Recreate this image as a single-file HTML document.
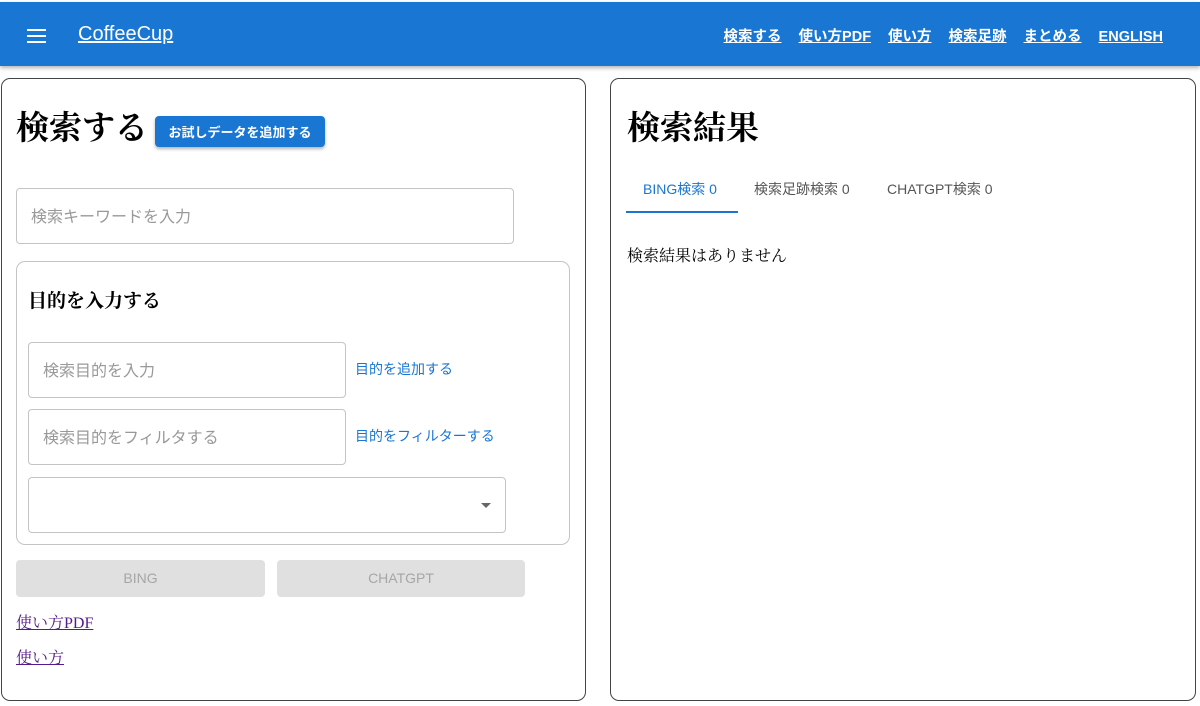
<!DOCTYPE html>
<html><head><meta charset="utf-8"><style>
*{box-sizing:border-box;margin:0;padding:0}
body{width:1200px;height:706px;background:#fff;position:relative;overflow:hidden;font-family:"Liberation Sans","Noto Sans CJK JP",sans-serif}
.bar{position:absolute;left:0;top:2px;width:1200px;height:64px;background:#1976d2;box-shadow:0 2px 4px rgba(0,0,0,.3)}
.ham{position:absolute;left:27px;top:27px;width:19px}
.ham i{display:block;height:2px;background:#fff;margin-bottom:4px}
.logo{position:absolute;left:78px;top:21px;color:#fff;font-size:20px;text-decoration:underline}
.nav{position:absolute;right:37px;top:23px;display:flex;align-items:baseline;gap:17px;color:#fff;font-size:14.5px;font-weight:bold}
.nav span{text-decoration:underline}
.card{position:absolute;top:78px;height:623px;border:1px solid #444;border-radius:9px}
.serif{font-family:"Liberation Serif","Noto Serif CJK SC",serif}
.abs{position:absolute}
.inp{position:absolute;border:1px solid #c4c4c4;border-radius:4px;color:#999;font-size:16px;padding-left:14px;padding-bottom:3px;display:flex;align-items:center}
.lnk{position:absolute;color:#1976d2;font-size:14px}
.gbtn{position:absolute;background:#e0e0e0;color:#a6a6a6;border-radius:4px;font-size:14px;display:flex;align-items:center;justify-content:center;height:37px;top:560px;padding-bottom:2px}
</style></head><body>
<div class="bar"><div class="ham"><i></i><i></i><i></i></div><div class="logo">CoffeeCup</div>
<div class="nav"><span>検索する</span><span>使い方PDF</span><span>使い方</span><span>検索足跡</span><span>まとめる</span><span>ENGLISH</span></div></div>

<div class="card" style="left:1px;width:585px"></div>
<div class="abs serif" style="left:16px;top:102px;font-size:33px;font-weight:bold">検索する</div>
<div class="abs" style="left:155px;top:116px;width:170px;height:31px;background:#1976d2;color:#fff;border-radius:4px;font-size:13px;font-weight:bold;display:flex;align-items:center;justify-content:center;box-shadow:0 2px 3px rgba(0,0,0,.3)">お試しデータを追加する</div>
<div class="inp" style="left:16px;top:188px;width:498px;height:56px">検索キーワードを入力</div>
<div class="abs" style="left:16px;top:261px;width:554px;height:284px;border:1px solid #c4c4c4;border-radius:9px"></div>
<div class="abs serif" style="left:28px;top:286px;font-size:19px;font-weight:bold">目的を入力する</div>
<div class="inp" style="left:28px;top:342px;width:318px;height:56px">検索目的を入力</div>
<div class="lnk" style="left:355px;top:359px">目的を追加する</div>
<div class="inp" style="left:28px;top:409px;width:318px;height:56px">検索目的をフィルタする</div>
<div class="lnk" style="left:355px;top:426px">目的をフィルターする</div>
<div class="inp" style="left:28px;top:477px;width:478px;height:56px"></div>
<div class="abs" style="left:481px;top:503px;border-left:5px solid transparent;border-right:5px solid transparent;border-top:5px solid #666"></div>
<div class="gbtn" style="left:16px;width:249px">BING</div>
<div class="gbtn" style="left:277px;width:248px">CHATGPT</div>
<div class="abs serif" style="left:16px;top:610px;font-size:16px;color:#551a8b;text-decoration:underline">使い方PDF</div>
<div class="abs serif" style="left:16px;top:645px;font-size:16px;color:#551a8b;text-decoration:underline">使い方</div>

<div class="card" style="left:610px;width:586px"></div>
<div class="abs serif" style="left:627px;top:102px;font-size:33px;font-weight:bold">検索結果</div>
<div class="abs" style="left:643px;top:179px;font-size:14px;color:#1976d2">BING検索 0</div>
<div class="abs" style="left:754px;top:179px;font-size:14px;color:#555">検索足跡検索 0</div>
<div class="abs" style="left:887px;top:179px;font-size:14px;color:#555">CHATGPT検索 0</div>
<div class="abs" style="left:626px;top:211px;width:112px;height:2px;background:#1976d2"></div>
<div class="abs serif" style="left:627px;top:243px;font-size:16px">検索結果はありません</div>
</body></html>
